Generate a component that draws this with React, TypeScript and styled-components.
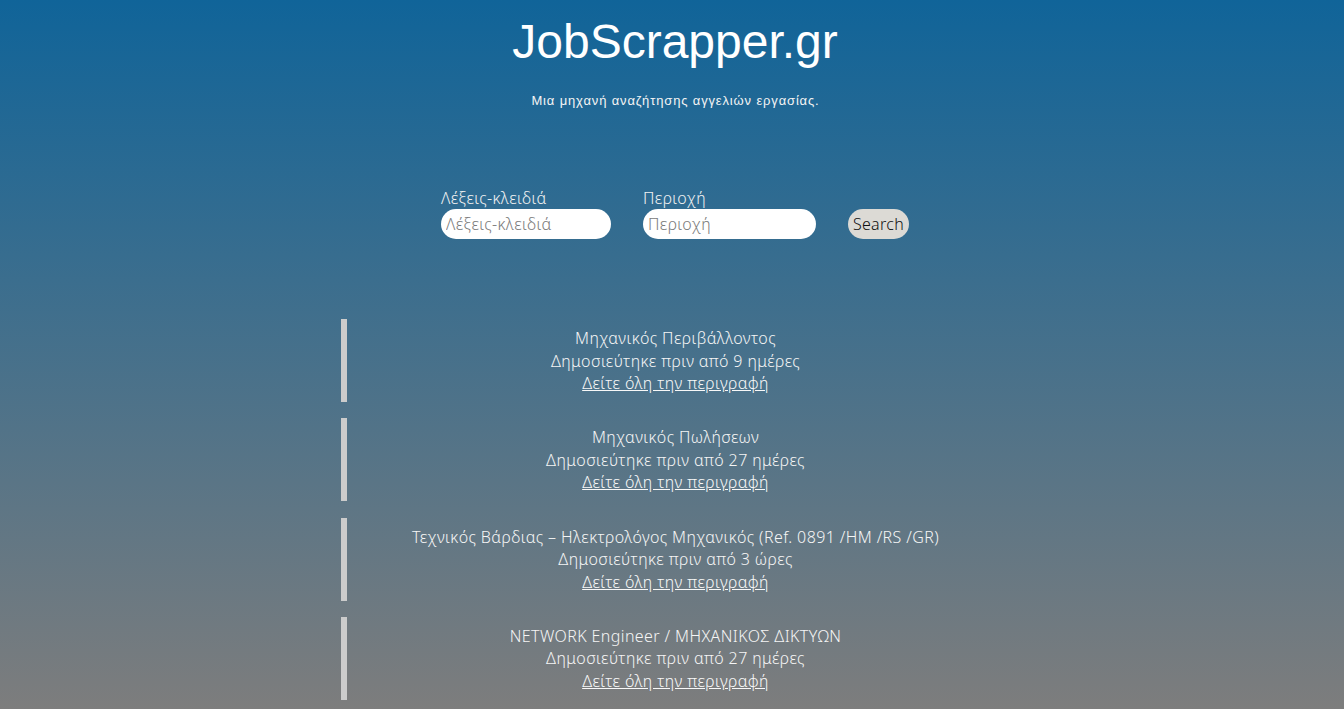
import React from "react";
import styled, { createGlobalStyle } from "styled-components";

const GlobalStyle = createGlobalStyle`
  html, body {
    margin: 0;
    padding: 0;
    min-height: 100%;
  }
  body {
    min-height: 100vh;
    background: linear-gradient(to bottom, #106499 0%, #7d7d7d 100%) fixed;
    color: #f2f2f2;
    font-family: "Noto Sans", "DejaVu Sans", sans-serif;
  }
`;

const Page = styled.div`
  display: flex;
  flex-direction: column;
  align-items: center;
  padding-top: 13px;
`;

const Title = styled.h1`
  margin: 0 0 0 6px;
  font-family: "Liberation Sans", Arial, sans-serif;
  font-weight: 400;
  font-size: 48px;
  line-height: 58px;
  color: #ffffff;
`;

const Subtitle = styled.p`
  margin: 21px 0 0 7px;
  font-family: "Liberation Sans", Arial, sans-serif;
  font-size: 13px;
  letter-spacing: 0.85px;
  line-height: 18px;
  color: #f4f4f4;
`;

const Form = styled.form`
  display: flex;
  align-items: flex-end;
  gap: 32px;
  margin: 79px 0 0 6px;
`;

const Field = styled.label`
  display: flex;
  flex-direction: column;
  gap: 2px;
  font-size: 16px;
  letter-spacing: 0.4px;
  line-height: 18px;
  font-weight: 300;
  color: #f2f2f2;
`;

const Input = styled.input<{ $w: number }>`
  box-sizing: border-box;
  width: ${(p) => p.$w}px;
  height: 30px;
  border: none;
  border-radius: 15px;
  padding: 0 5px;
  background: #ffffff;
  font-family: "Noto Sans", "DejaVu Sans", sans-serif;
  font-weight: 300;
  font-size: 16px;
  letter-spacing: 0.4px;
  color: #333;
  outline: none;
  &::placeholder {
    color: #7a7a7a;
  }
`;

const Button = styled.button`
  box-sizing: border-box;
  height: 30px;
  width: 61px;
  border: none;
  border-radius: 15px;
  background: #dcdad5;
  color: #111;
  font-family: "Noto Sans", "DejaVu Sans", sans-serif;
  font-weight: 300;
  font-size: 16px;
  letter-spacing: 0.3px;
  padding: 0;
`;

const Results = styled.ul`
  list-style: none;
  margin: 80px 0 0 1px;
  padding: 0;
  width: 664px;
  display: flex;
  flex-direction: column;
  gap: 16.33px;
`;

const Card = styled.li`
  border-left: 6px solid #cccccc;
  padding: 8px 0;
  height: 83px;
  box-sizing: border-box;
  display: flex;
  flex-direction: column;
  align-items: center;
  font-size: 16px;
  letter-spacing: 0.4px;
  font-weight: 300;
  line-height: 22.5px;
  color: #f5f5f5;
`;

const Line = styled.span``;

const Link = styled.a`
  color: #f8f8f8;
  text-decoration: underline;
`;

const jobs = [
  { title: "Μηχανικός Περιβάλλοντος", posted: "Δημοσιεύτηκε πριν από 9 ημέρες" },
  { title: "Μηχανικός Πωλήσεων", posted: "Δημοσιεύτηκε πριν από 27 ημέρες" },
  {
    title: "Τεχνικός Βάρδιας – Ηλεκτρολόγος Μηχανικός (Ref. 0891 /HM /RS /GR)",
    posted: "Δημοσιεύτηκε πριν από 3 ώρες",
  },
  { title: "NETWORK Engineer / ΜΗΧΑΝΙΚΟΣ ΔΙΚΤΥΩΝ", posted: "Δημοσιεύτηκε πριν από 27 ημέρες" },
];

export default function App() {
  return (
    <>
      <GlobalStyle />
      <Page>
        <Title>JobScrapper.gr</Title>
        <Subtitle>Μια μηχανή αναζήτησης αγγελιών εργασίας.</Subtitle>
        <Form onSubmit={(e) => e.preventDefault()}>
          <Field>
            Λέξεις-κλειδιά
            <Input $w={170} placeholder="Λέξεις-κλειδιά" />
          </Field>
          <Field>
            Περιοχή
            <Input $w={173} placeholder="Περιοχή" />
          </Field>
          <Button type="submit">Search</Button>
        </Form>
        <Results>
          {jobs.map((j, i) => (
            <Card key={i}>
              <Line>{j.title}</Line>
              <Line>{j.posted}</Line>
              <Link href="#">Δείτε όλη την περιγραφή</Link>
            </Card>
          ))}
        </Results>
      </Page>
    </>
  );
}
